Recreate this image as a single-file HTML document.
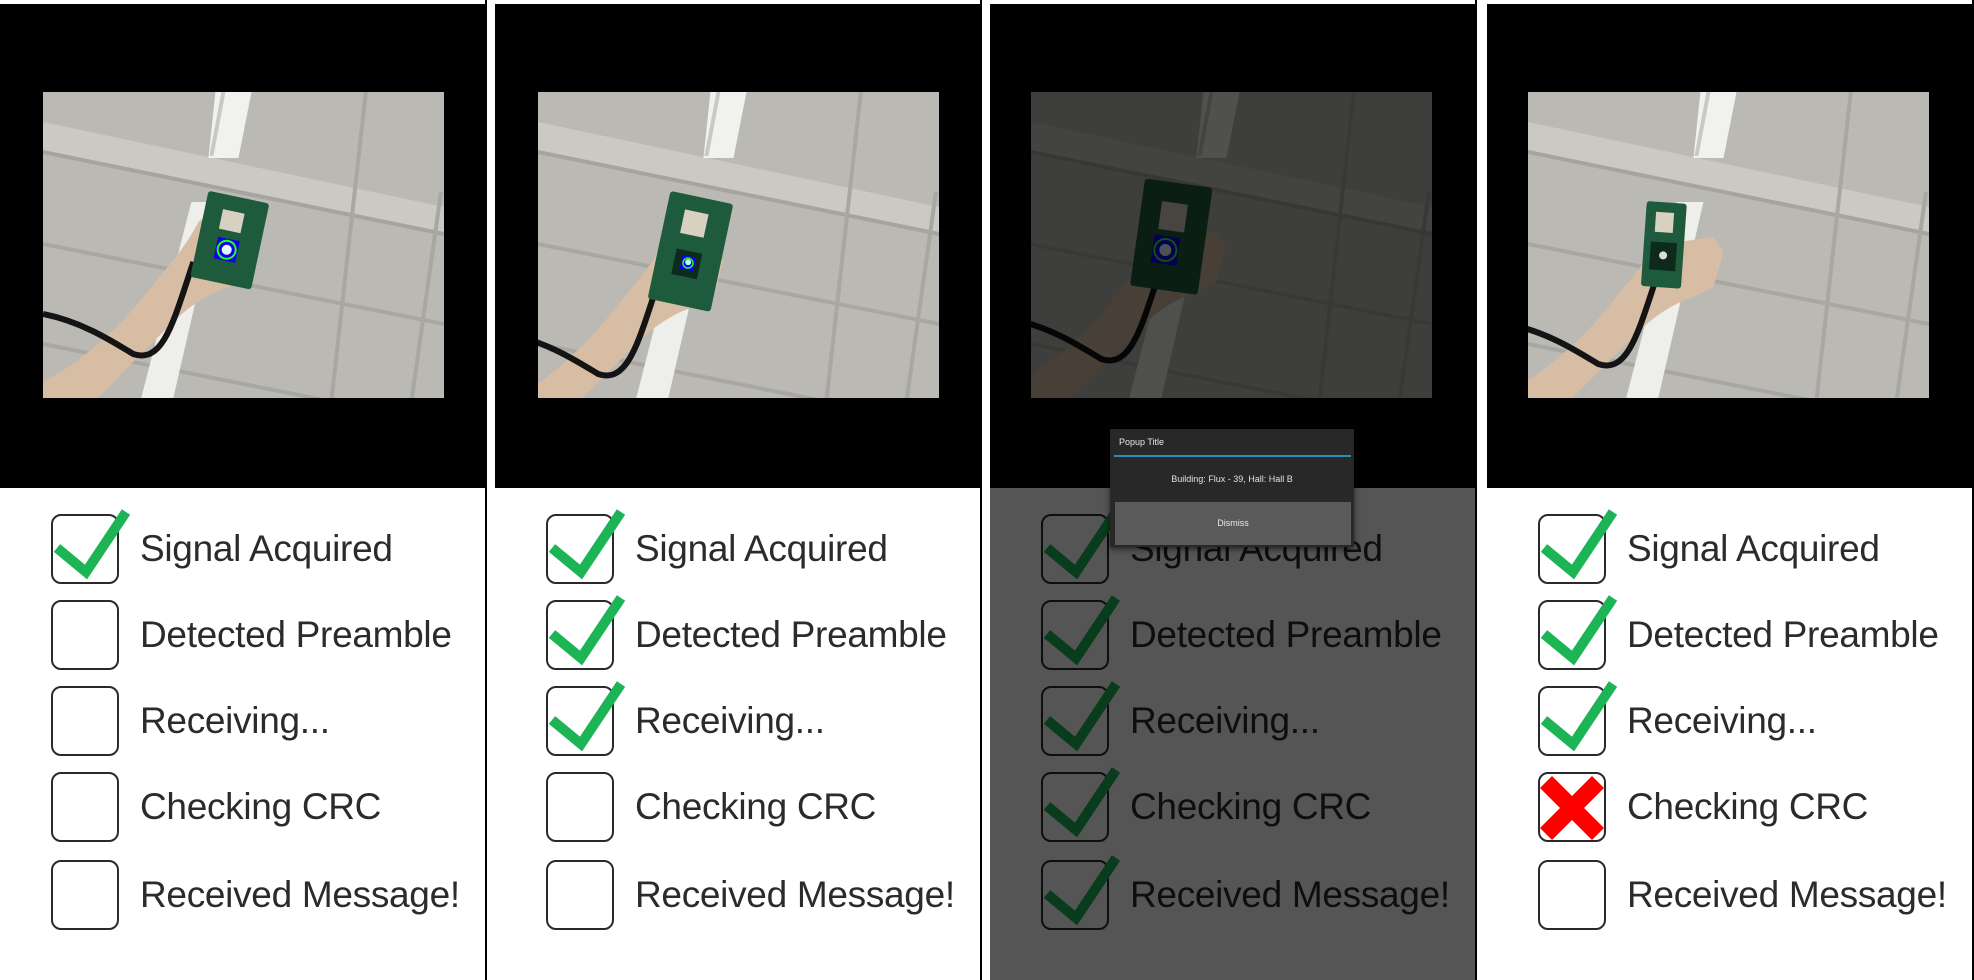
<!DOCTYPE html>
<html><head><meta charset="utf-8"><style>
html,body{margin:0;padding:0;background:#fff;}
body{width:1974px;height:980px;position:relative;overflow:hidden;font-family:"Liberation Sans",sans-serif;}
.panel{position:absolute;top:4px;width:485px;height:976px;background:#fff;overflow:hidden;}
.top{position:absolute;left:0;top:0;width:100%;height:484px;background:#000;}
.photo{position:absolute;top:88px;left:43px;width:401px;height:306px;}
.row{position:absolute;left:52px;height:70px;}
.box{position:absolute;left:0;top:0;width:64px;height:66px;border:2.5px solid #2a2a2a;border-radius:10px;}
.lbl{position:absolute;left:89px;top:14px;font-size:37px;color:#2b2b2b;white-space:nowrap;letter-spacing:-0.3px;}
.mk{position:absolute;left:0;top:-4px;overflow:visible;}
</style></head><body>

<svg width="0" height="0" style="position:absolute">
<defs>
<symbol id="ceil" viewBox="0 0 400 306">
<rect width="400" height="306" fill="#bab9b4"/>
<polygon points="0,30 400,115 400,140 0,58" fill="#cac9c4"/>
<polygon points="0,58 400,140 400,144 0,62" fill="#a5a49f"/>
<polygon points="0,150 400,230 400,234 0,154" fill="#a8a7a2"/>
<polygon points="0,250 400,330 400,334 0,254" fill="#a8a7a2"/>
<polygon points="320,0 324,0 290,306 286,306" fill="#a8a7a2"/>
<polygon points="395,100 399,100 370,306 366,306" fill="#a8a7a2"/>
<polygon points="172,0 208,0 195,66 165,66" fill="#f1f1ee"/>
<polygon points="148,110 175,110 130,306 98,306" fill="#eeeeeb"/>
<polygon points="178,0 182,0 170,64 166,64" fill="#c8c8c4"/>
</symbol>
<symbol id="hand" viewBox="0 0 400 306">
<path d="M0,306 L0,290 C40,270 80,230 100,205 C115,185 140,160 155,130 C165,120 175,128 170,140 L205,135 L215,150 L205,185 L185,195 C170,200 150,210 130,230 C110,250 70,290 55,306 Z" fill="#d8bda5"/>
<path d="M0,222 C40,230 70,250 90,262 C120,272 130,230 150,170" stroke="#141414" stroke-width="6" fill="none"/>
</symbol>
</defs>
</svg>

<div class="panel" style="left:0;">
 <div class="top"></div>
 <svg class="photo" viewBox="0 0 400 306" preserveAspectRatio="none">
  <use href="#ceil"/><use href="#hand"/>
  <g transform="rotate(12 190 150)">
   <rect x="155" y="105" width="62" height="88" fill="#1e5a3c" rx="3"/>
   <rect x="173" y="120" width="22" height="20" fill="#d8d0c0"/>
   <rect x="174" y="148" width="22" height="22" fill="#1000ee"/>
   <circle cx="185" cy="159" r="9" fill="none" stroke="#2f2" stroke-width="2"/>
   <circle cx="185" cy="159" r="5" fill="#e8f6ff"/>
  </g>
 </svg>
</div>

<div class="panel" style="left:495px;">
 <div class="top"></div>
 <svg class="photo" viewBox="0 0 400 306" preserveAspectRatio="none">
  <use href="#ceil"/>
  <g transform="translate(-30,20)"><use href="#hand"/></g>
  <g transform="rotate(12 155 160)">
   <rect x="120" y="105" width="64" height="110" fill="#1e5a3c" rx="3"/>
   <rect x="138" y="120" width="24" height="24" fill="#d8d0c0"/>
   <rect x="138" y="160" width="26" height="26" fill="#0d2a1d"/>
   <rect x="145" y="165" width="14" height="14" fill="#1000ee"/>
   <circle cx="152" cy="172" r="5" fill="none" stroke="#2f2" stroke-width="1.5"/>
   <circle cx="152" cy="171" r="3" fill="#bff"/>
  </g>
 </svg>
</div>

<div class="panel" style="left:990px;">
 <div class="top"></div>
 <svg class="photo" style="left:41px" viewBox="0 0 400 306" preserveAspectRatio="none">
  <use href="#ceil"/>
  <g transform="translate(-20,5)"><use href="#hand"/></g>
  <g transform="rotate(8 120 150)">
   <rect x="105" y="88" width="68" height="108" fill="#1e5a3c" rx="3"/>
   <rect x="125" y="108" width="26" height="28" fill="#d8d0c0"/>
   <rect x="122" y="142" width="26" height="28" fill="#1000ee"/>
   <circle cx="135" cy="156" r="11" fill="none" stroke="#2f2" stroke-width="2"/>
   <circle cx="135" cy="156" r="6" fill="#e8f6ff"/>
  </g>
 </svg>
</div>

<div class="panel" style="left:1487px;">
 <div class="top"></div>
 <svg class="photo" style="left:41px" viewBox="0 0 400 306" preserveAspectRatio="none">
  <use href="#ceil"/>
  <g transform="translate(-20,10)"><use href="#hand"/></g>
  <g transform="rotate(4 130 160)">
   <rect x="115" y="110" width="40" height="85" fill="#1e5a3c" rx="3"/>
   <rect x="125" y="120" width="18" height="20" fill="#d8d0c0"/>
   <rect x="122" y="150" width="26" height="28" fill="#0d2a1d"/>
   <circle cx="135" cy="163" r="4" fill="#ddd"/>
  </g>
 </svg>
</div>

<div id="rows"></div>
<script>
var panels=[0,495,990,1487];
var labels=["Signal Acquired","Detected Preamble","Receiving...","Checking CRC","Received Message!"];
var tops=[514,600,686,772,860];
var states=[
 ["c","","","",""],
 ["c","c","c","",""],
 ["c","c","c","c","c"],
 ["c","c","c","x",""]];
var html="";
for(var p=0;p<4;p++){
 for(var i=0;i<5;i++){
  var s=states[p][i];
  var mk="";
  if(s=="c") mk='<svg class="mk" width="80" height="70" viewBox="0 0 80 70"><path d="M6,38 L35,62 L75,2" stroke="#1db455" stroke-width="10" fill="none"/></svg>';
  if(s=="x") mk='<svg class="mk" style="top:0" width="70" height="70" viewBox="0 0 70 70"><path d="M8,10 L60,62 M60,10 L8,62" stroke="#ff0000" stroke-width="17" fill="none"/></svg>';
  html+='<div class="row" style="left:'+(panels[p]+51)+'px;top:'+tops[i]+'px"><div class="box"></div>'+mk+'<div class="lbl">'+labels[i]+'</div></div>';
 }
}
document.getElementById("rows").innerHTML=html;
</script>

<div style="position:absolute;left:990px;top:4px;width:485px;height:976px;background:rgba(0,0,0,0.667);"></div>

<div style="position:absolute;left:1110px;top:429px;width:244px;height:118px;background:#282828;box-shadow:0 2px 6px rgba(0,0,0,0.6);">
 <div style="position:absolute;left:9px;top:8px;font-size:9px;color:#e8e8e8;">Popup Title</div>
 <div style="position:absolute;left:4px;top:26px;width:237px;height:2px;background:#2a8fb8;"></div>
 <div style="position:absolute;left:0;top:45px;width:100%;text-align:center;font-size:9px;color:#e0e0e0;">Building: Flux - 39, Hall: Hall B</div>
 <div style="position:absolute;left:5px;top:73px;width:236px;height:43px;background:#5a5a5a;color:#e8e8e8;font-size:9px;text-align:center;line-height:43px;">Dismiss</div>
</div>

<div style="position:absolute;left:0;top:0;width:1974px;height:4px;background:#fff;"></div>
<div style="position:absolute;left:485px;top:0;width:2px;height:980px;background:#000;"></div>
<div style="position:absolute;left:980px;top:0;width:2px;height:980px;background:#000;"></div>
<div style="position:absolute;left:1475px;top:0;width:2px;height:980px;background:#000;"></div>
<div style="position:absolute;left:1972px;top:0;width:2px;height:980px;background:#000;"></div>
</body></html>
